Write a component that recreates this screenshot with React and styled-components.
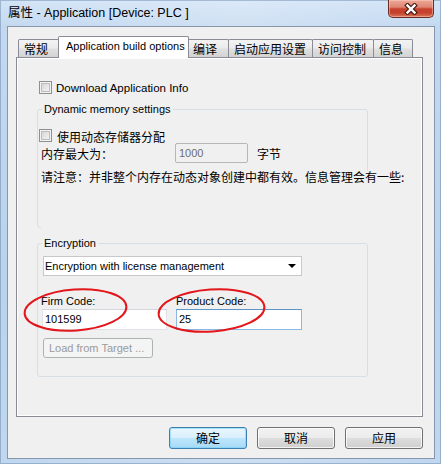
import React from "react";
import styled, { createGlobalStyle } from "styled-components";

const UI = `"Liberation Sans", "Noto Sans CJK SC", sans-serif`;
const CJK = `"Noto Sans CJK SC", "Liberation Sans", sans-serif`;

const Global = createGlobalStyle`
  html, body { margin: 0; padding: 0; background: #ffffff; }
  body { font-family: ${UI}; color: #000; }
  *, *::before, *::after { box-sizing: border-box; }
`;

const Window = styled.div`
  position: relative;
  width: 441px;
  height: 464px;
  display: flex;
  flex-direction: column;
  padding: 0 6px 5px 7px;
  background:
    linear-gradient(90deg, rgba(255,255,255,0) 0%, rgba(255,255,255,0.2) 55%, rgba(255,255,255,0) 100%),
    linear-gradient(180deg, #d3e4f7 0px, #c4d9f0 26px, #bad2ec 60%, #c0d7ef 100%);
  box-shadow: inset 0 0 0 1px rgba(70, 100, 140, 0.35);
  overflow: hidden;
`;

const TitleBar = styled.div`
  flex: none;
  height: 26px;
  display: flex;
  align-items: flex-start;
`;

const Title = styled.div`
  flex: 1;
  padding-left: 1px;
  font-size: 12.5px;
  line-height: 26px;
  white-space: nowrap;
`;

const CloseButton = styled.div`
  width: 46px;
  height: 18px;
  margin-right: 1px;
  border: 1px solid #6b2c23;
  border-top: none;
  border-radius: 0 0 5px 5px;
  background: linear-gradient(180deg, #eca898 0%, #df8572 42%, #c8432e 52%, #c4402c 75%, #db7658 100%);
  box-shadow: inset 0 0 0 1px rgba(255, 215, 205, 0.45);
  display: flex;
  align-items: center;
  justify-content: center;
`;

const Client = styled.div`
  flex: 1;
  display: flex;
  flex-direction: column;
  background: #f0f0f0;
  border: 1px solid #8596ad;
  padding: 9px 11px 0 8px;
`;

const TabStrip = styled.div`
  position: relative;
  z-index: 1;
  flex: none;
  display: flex;
  align-items: flex-end;
  height: 22px;
  padding-left: 2px;
`;

const Tab = styled.div`
  flex: none;
  position: relative;
  z-index: ${(p) => (p.$active ? 2 : 1)};
  width: ${(p) => p.$w}px;
  height: ${(p) => (p.$active ? 22 : 18)}px;
  margin-left: ${(p) => (p.$active ? -2 : p.$first ? 0 : -1)}px;
  margin-right: ${(p) => (p.$active ? -1 : 0)}px;
  margin-bottom: ${(p) => (p.$active ? 0 : 1)}px;
  border: 1px solid #898c95;
  border-bottom: none;
  border-radius: 2px 2px 0 0;
  background: ${(p) =>
    p.$active
      ? "#ffffff"
      : "linear-gradient(180deg, #f3f3f3 0%, #ebebeb 45%, #dfdfdf 55%, #d3d3d3 100%)"};
  padding: ${(p) => (p.$active ? "0 0 3px 7px" : "0 0 0 5px")};
  font-family: ${(p) => (p.$active ? UI : CJK)};
  font-size: ${(p) => (p.$active ? 11 : 12)}px;
  display: flex;
  align-items: center;
  white-space: nowrap;
`;

const Panel = styled.div`
  flex: none;
  margin-top: -1px;
  height: 360px;
  border: 1px solid #898c95;
  box-shadow: inset 0 0 0 1px #ffffff;
  background: #f0f0f0;
  padding: 23px 0 0 20px;
  display: flex;
  flex-direction: column;
  align-items: flex-start;
`;

const CheckRow = styled.div`
  display: flex;
  align-items: ${(p) => (p.$top ? "flex-start" : "center")};
  height: ${(p) => p.$h || 13}px;
  margin-top: ${(p) => p.$mt || 0}px;
  padding-left: ${(p) => p.$pl || 0}px;
  flex: none;
`;

const CheckBox = styled.span`
  flex: none;
  width: 13px;
  height: 13px;
  border: 1px solid #8e8f8f;
  background: linear-gradient(135deg, #cfcfcf 0%, #e9e9e9 60%, #fafafa 100%);
  box-shadow: inset 0 0 0 1px #f4f4f4, inset 0 0 0 2px #b9bcc0;
`;

const CheckLabel = styled.span`
  margin-left: ${(p) => p.$ml}px;
  margin-top: ${(p) => p.$mt || 0}px;
  font-family: ${(p) => (p.$cjk ? CJK : UI)};
  font-size: ${(p) => (p.$cjk ? 12 : 11.5)}px;
  line-height: ${(p) => (p.$cjk ? 12 : 14)}px;
  white-space: nowrap;
`;

const GroupBox = styled.div`
  flex: none;
  width: 331px;
  margin-top: ${(p) => p.$mt}px;
  border: 1px solid #d5dfe5;
  border-radius: 3px;
  padding-bottom: ${(p) => p.$pb || 0}px;
  display: flex;
  flex-direction: column;
  align-items: flex-start;
`;

const Legend = styled.span`
  margin: -8px 0 0 4px;
  padding: 0 2px;
  background: #f0f0f0;
  font-size: 11px;
  line-height: 14px;
  white-space: nowrap;
`;

const MemRow = styled.div`
  flex: none;
  display: flex;
  align-items: center;
  height: 20px;
`;

const RowLabel = styled.span`
  flex: none;
  width: ${(p) => p.$w}px;
  padding-left: ${(p) => p.$pl || 0}px;
  margin-left: ${(p) => p.$ml || 0}px;
  font-family: ${CJK};
  font-size: 12px;
  line-height: 13px;
  white-space: nowrap;
`;

const DisabledInput = styled.div`
  flex: none;
  width: 73px;
  height: 20px;
  border: 1px solid #b7b7b7;
  border-radius: 2px;
  background: #f0f0f0;
  color: #6d6d6d;
  font-size: 11px;
  line-height: 18px;
  padding-left: 3px;
`;

const Note = styled.div`
  flex: none;
  width: 368px;
  height: 59px;
  margin: 8px 0 -3px 3px;
  background: #f0f0f0;
  font-family: ${CJK};
  font-size: 12px;
  line-height: 12px;
  white-space: nowrap;
`;

const Combo = styled.div`
  flex: none;
  width: 259px;
  height: 20px;
  margin: 6px 0 0 5px;
  border: 1px solid #c8c8c8;
  background: #ffffff;
  display: flex;
  align-items: center;
  justify-content: space-between;
  padding: 0 5px 0 1px;
  font-size: 11px;
  white-space: nowrap;
`;

const Fields = styled.div`
  flex: none;
  display: flex;
  margin: 18px 0 0 3px;
`;

const Field = styled.div`
  width: ${(p) => p.$w}px;
  display: flex;
  flex-direction: column;
  gap: 1px;
`;

const FieldLabel = styled.span`
  font-size: 11px;
  line-height: 14px;
  white-space: nowrap;
`;

const TextInput = styled.div`
  width: ${(p) => p.$w}px;
  height: 21px;
  margin-left: ${(p) => p.$ml || 0}px;
  border: 1px solid ${(p) => (p.$focus ? "#8ab8e4" : "#dfe2e8")};
  border-top-color: ${(p) => (p.$focus ? "#5d95c9" : "#d3d6dc")};
  background: #ffffff;
  font-size: 11px;
  line-height: 19px;
  padding-left: 2px;
`;

const TargetButton = styled.div`
  flex: none;
  width: 110px;
  height: 20px;
  margin: 8px 0 0 5px;
  border: 1px solid #adb2b5;
  border-radius: 3px;
  background: #f4f4f4;
  color: #9a9a9a;
  font-size: 11px;
  line-height: 18px;
  padding-left: 5px;
  white-space: nowrap;
`;

const Footer = styled.div`
  flex: none;
  display: flex;
  justify-content: flex-end;
  gap: 10px;
  margin-top: 10px;
`;

const DialogButton = styled.div`
  width: 78px;
  height: 22px;
  border: 1px solid ${(p) => (p.$default ? "#3c7fb1" : "#707070")};
  border-radius: 3px;
  background: ${(p) =>
    p.$default
      ? "linear-gradient(180deg, #eaf6fd 0%, #d9f0fc 48%, #bee6fd 52%, #a7d9f5 100%)"
      : "linear-gradient(180deg, #f2f2f2 0%, #ebebeb 48%, #dddddd 52%, #cfcfcf 100%)"};
  box-shadow: inset 0 0 0 1px ${(p) => (p.$default ? "rgba(120, 210, 250, 0.6)" : "rgba(255,255,255,0.75)")};
  font-family: ${CJK};
  font-size: 12px;
  line-height: 20px;
  text-align: center;
`;

const Overlay = styled.svg`
  position: absolute;
  left: 0;
  top: 0;
  pointer-events: none;
`;

function CloseGlyph() {
  return (
    <svg width="14" height="12" viewBox="0 0 14 12">
      <path d="M3.5 2.5 L10.5 9.5 M10.5 2.5 L3.5 9.5" stroke="#4a1b14" strokeWidth="4.6" strokeLinecap="square" />
      <path d="M3.5 2.5 L10.5 9.5 M10.5 2.5 L3.5 9.5" stroke="#ffffff" strokeWidth="2.4" strokeLinecap="square" />
    </svg>
  );
}

function ComboArrow() {
  return (
    <svg width="8" height="4" viewBox="0 0 8 4">
      <polygon points="0,0 8,0 4,4" fill="#000" />
    </svg>
  );
}

const tabs = [
  { label: "常规", w: 42 },
  { label: "Application build options", w: 131, active: true },
  { label: "编译", w: 42 },
  { label: "启动应用设置", w: 85 },
  { label: "访问控制", w: 62 },
  { label: "信息", w: 40 },
];

export default function App() {
  return (
    <>
      <Global />
      <Window>
        <TitleBar>
          <Title>属性 - Application [Device: PLC ]</Title>
          <CloseButton>
            <CloseGlyph />
          </CloseButton>
        </TitleBar>
        <Client>
          <TabStrip>
            {tabs.map((t, i) => (
              <Tab key={t.label} $w={t.w} $active={t.active} $first={i === 0}>
                {t.label}
              </Tab>
            ))}
          </TabStrip>
          <Panel>
            <CheckRow $pl={2}>
              <CheckBox />
              <CheckLabel $ml={4}>Download Application Info</CheckLabel>
            </CheckRow>

            <GroupBox $mt={15}>
              <Legend>Dynamic memory settings</Legend>
              <CheckRow $mt={13} $h={14} $pl={1} $top>
                <CheckBox />
                <CheckLabel $ml={5} $mt={2} $cjk>使用动态存储器分配</CheckLabel>
              </CheckRow>
              <MemRow>
                <RowLabel $w={137} $pl={3}>内存最大为：</RowLabel>
                <DisabledInput>1000</DisabledInput>
                <RowLabel $w={40} $ml={9}>字节</RowLabel>
              </MemRow>
              <Note>请注意：并非整个内存在动态对象创建中都有效。信息管理会有一些:</Note>
            </GroupBox>

            <GroupBox $mt={15} $pb={18}>
              <Legend>Encryption</Legend>
              <Combo>
                <span>Encryption with license management</span>
                <ComboArrow />
              </Combo>
              <Fields>
                <Field $w={135}>
                  <FieldLabel>Firm Code:</FieldLabel>
                  <TextInput $w={125} $ml={1}>101599</TextInput>
                </Field>
                <Field $w={126}>
                  <FieldLabel>Product Code:</FieldLabel>
                  <TextInput $w={126} $focus>25</TextInput>
                </Field>
              </Fields>
              <TargetButton>Load from Target ...</TargetButton>
            </GroupBox>
          </Panel>
          <Footer>
            <DialogButton $default>确定</DialogButton>
            <DialogButton>取消</DialogButton>
            <DialogButton>应用</DialogButton>
          </Footer>
        </Client>
        <Overlay width="441" height="464" viewBox="0 0 441 464">
          <ellipse cx="75.5" cy="310" rx="51" ry="20.5" fill="none" stroke="#e3161b" strokeWidth="2" transform="rotate(-4 75.5 310)" />
          <ellipse cx="211.5" cy="310.5" rx="53" ry="21" fill="none" stroke="#e3161b" strokeWidth="2" transform="rotate(-4 211.5 310.5)" />
        </Overlay>
      </Window>
    </>
  );
}
